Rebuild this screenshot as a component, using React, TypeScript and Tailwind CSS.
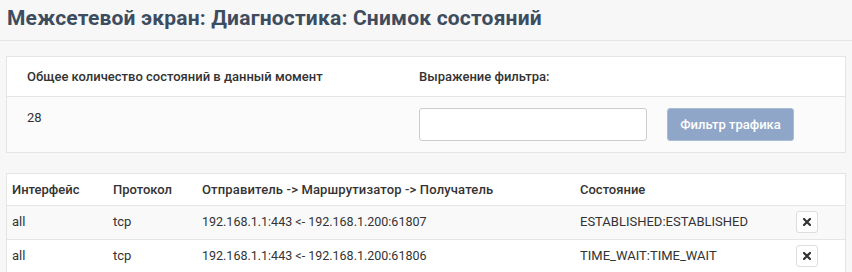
import React from 'react';

const rows = [
  { iface: 'all', proto: 'tcp', route: '192.168.1.1:443 <- 192.168.1.200:61807', state: 'ESTABLISHED:ESTABLISHED' },
  { iface: 'all', proto: 'tcp', route: '192.168.1.1:443 <- 192.168.1.200:61806', state: 'TIME_WAIT:TIME_WAIT' },
];

const XIcon = () => (
  <svg width="8" height="8" viewBox="0 0 8 8">
    <path d="M1 1 L7 7 M7 1 L1 7" stroke="#333" strokeWidth="2.2" strokeLinecap="square" />
  </svg>
);

const App: React.FC = () => {
  return (
    <div className="w-[852px] h-[272px] overflow-hidden bg-[#f7f7f7] text-[#333] font-['Roboto',sans-serif]">
      {/* page header */}
      <header className="h-[41px] border-b border-[#e5e5e5] pl-[7px] flex items-center">
        <h1 className="text-[21px] font-bold text-[#3d4c5e] tracking-[0.2px] leading-none -mt-[3px]">
          Межсетевой экран: Диагностика: Снимок состояний
        </h1>
      </header>

      {/* summary card */}
      <section className="mx-[6px] mt-[15px] border border-[#e5e5e5] bg-white">
        <div className="flex h-[40px] items-center border-b border-[#e5e5e5] text-[13px] font-medium">
          <div className="w-[412px] pl-[20px]">Общее количество состояний в данный момент</div>
          <div>Выражение фильтра:</div>
        </div>
        <div className="flex h-[55px] items-center bg-[#fbfbfb] text-[13px]">
          <div className="w-[412px] pl-[20px] -mt-[14px]">28</div>
          <input
            type="text"
            className="w-[228px] h-[33px] rounded-[3px] border border-[#ccc] bg-white px-2 outline-none"
          />
          <button className="ml-[20px] w-[127px] h-[33px] rounded-[3px] border border-[#a9bbd6] bg-[#8fa6c8] text-white text-[13px] font-medium">
            Фильтр трафика
          </button>
        </div>
      </section>

      {/* states table */}
      <section className="mx-[6px] mt-[20px] border border-[#e5e5e5] bg-white">
        <table className="w-full border-collapse text-[13px]">
          <thead>
            <tr className="h-[31px] border-b border-[#e5e5e5] text-left">
              <th className="w-[101px] pl-[5px] font-medium">Интерфейс</th>
              <th className="w-[89px] pl-[5px] font-medium">Протокол</th>
              <th className="w-[378px] pl-[5px] font-medium tracking-[0.15px]">Отправитель -&gt; Маршрутизатор -&gt; Получатель</th>
              <th className="pl-[5px] font-medium">Состояние</th>
              <th className="w-[50px]"></th>
            </tr>
          </thead>
          <tbody>
            {rows.map((r, i) => (
              <tr key={i} className={`h-[34px] border-b border-[#e5e5e5] ${i % 2 === 0 ? 'bg-[#f9f9f9]' : 'bg-white'}`}>
                <td className="pl-[5px]">{r.iface}</td>
                <td className="pl-[5px]">{r.proto}</td>
                <td className="pl-[5px] text-[12.5px]">{r.route}</td>
                <td className="pl-[5px]">{r.state}</td>
                <td>
                  <button className="ml-[1px] flex h-[22px] w-[22px] items-center justify-center rounded-[3px] border border-[#ddd] bg-white">
                    <XIcon />
                  </button>
                </td>
              </tr>
            ))}
          </tbody>
        </table>
      </section>
    </div>
  );
};

export default App;
